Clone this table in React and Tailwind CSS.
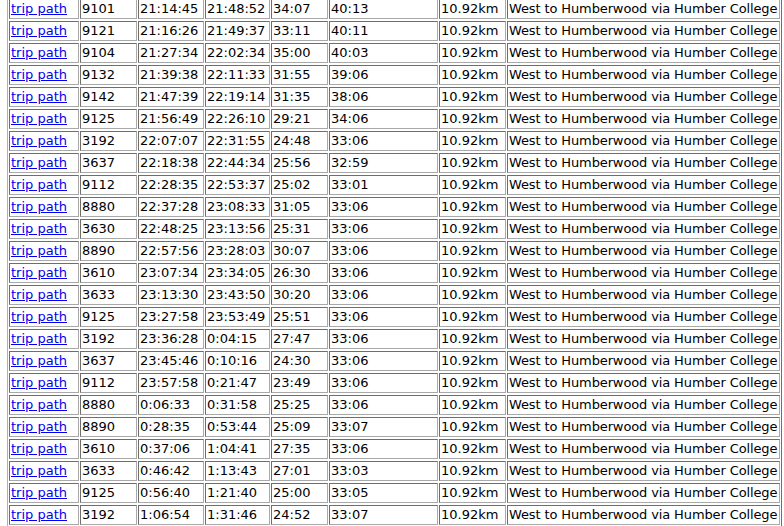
const rows = [
  ['9101', '21:14:45', '21:48:52', '34:07', '40:13'],
  ['9121', '21:16:26', '21:49:37', '33:11', '40:11'],
  ['9104', '21:27:34', '22:02:34', '35:00', '40:03'],
  ['9132', '21:39:38', '22:11:33', '31:55', '39:06'],
  ['9142', '21:47:39', '22:19:14', '31:35', '38:06'],
  ['9125', '21:56:49', '22:26:10', '29:21', '34:06'],
  ['3192', '22:07:07', '22:31:55', '24:48', '33:06'],
  ['3637', '22:18:38', '22:44:34', '25:56', '32:59'],
  ['9112', '22:28:35', '22:53:37', '25:02', '33:01'],
  ['8880', '22:37:28', '23:08:33', '31:05', '33:06'],
  ['3630', '22:48:25', '23:13:56', '25:31', '33:06'],
  ['8890', '22:57:56', '23:28:03', '30:07', '33:06'],
  ['3610', '23:07:34', '23:34:05', '26:30', '33:06'],
  ['3633', '23:13:30', '23:43:50', '30:20', '33:06'],
  ['9125', '23:27:58', '23:53:49', '25:51', '33:06'],
  ['3192', '23:36:28', '0:04:15', '27:47', '33:06'],
  ['3637', '23:45:46', '0:10:16', '24:30', '33:06'],
  ['9112', '23:57:58', '0:21:47', '23:49', '33:06'],
  ['8880', '0:06:33', '0:31:58', '25:25', '33:06'],
  ['8890', '0:28:35', '0:53:44', '25:09', '33:07'],
  ['3610', '0:37:06', '1:04:41', '27:35', '33:06'],
  ['3633', '0:46:42', '1:13:43', '27:01', '33:03'],
  ['9125', '0:56:40', '1:21:40', '25:00', '33:05'],
  ['3192', '1:06:54', '1:31:46', '24:52', '33:07'],
];

const cell =
  'border border-t-[#6e6e6e] border-l-[#6e6e6e] border-b-[#a9a9a9] border-r-[#a9a9a9] p-px h-5 leading-4 whitespace-nowrap align-middle overflow-hidden';

export default function App() {
  return (
    <div className="bg-white w-[784px] h-[526px] overflow-hidden font-['DejaVu_Sans','Verdana',sans-serif] text-[13px] text-black">
      <table className="ml-[7px] -mt-[4px] w-[775px] table-fixed border-separate [border-spacing:1px_2px] border border-t-[#b0b0b0] border-l-[#b0b0b0] border-b-[#6e6e6e] border-r-[#6e6e6e]">
        <tbody>
          {rows.map((r, i) => (
            <tr key={i}>
              <td className={`${cell} w-[70px]`}>
                <a href="#" className="text-[#0000ee] underline">trip path</a>
              </td>
              <td className={`${cell} w-[57px]`}>{r[0]}</td>
              <td className={`${cell} w-[66px]`}>{r[1]}</td>
              <td className={`${cell} w-[65px]`}>{r[2]}</td>
              <td className={`${cell} w-[57px]`}>{r[3]}</td>
              <td className={`${cell} w-[109px]`}>{r[4]}</td>
              <td className={`${cell} w-[67px]`}>10.92km</td>
              <td className={`${cell} tracking-[-0.12px]`}>West to Humberwood via Humber College</td>
            </tr>
          ))}
        </tbody>
      </table>
    </div>
  );
}
